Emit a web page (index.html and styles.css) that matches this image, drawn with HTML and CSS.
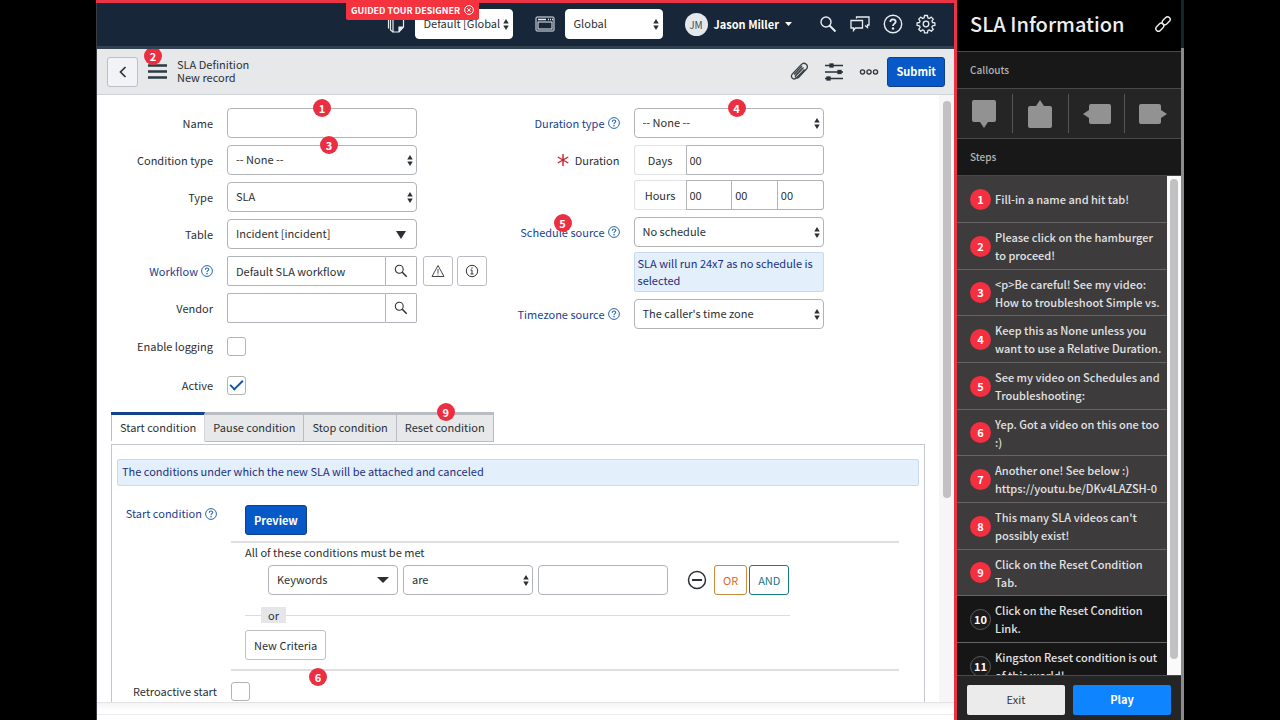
FILE: index.html
```html
<!DOCTYPE html>
<html lang="en">
<head>
<meta charset="utf-8">
<title>SLA Definition</title>
<link rel="stylesheet" href="styles.css">
</head>
<body>
<svg class="defs" aria-hidden="true">
  <symbol id="updown" viewBox="0 0 6 12"><path d="M3 0 6 5H0zM3 12 0 7h6z" fill="#2b3036"/></symbol>
  <symbol id="down" viewBox="0 0 10 8"><path d="M0 0h10L5 8z" fill="#2b3036"/></symbol>
  <symbol id="flat" viewBox="0 0 12 6"><path d="M0 0h12L6 6z" fill="#2b3036"/></symbol>
  <symbol id="search" viewBox="0 0 16 16"><g fill="none" stroke="currentColor"><circle cx="6" cy="6" r="4.5" stroke-width="1.2"/><path d="m9.5 9.500 5 5" stroke-width="1.7"/></g></symbol>
  <symbol id="help" viewBox="0 0 12 12"><circle cx="6" cy="6" r="5.400" fill="none" stroke="currentColor" stroke-width="1"/><path d="M4.300 4.700C4.300 2.500 7.700 2.600 7.700 4.500 7.700 5.700 6 5.700 6 7.200" fill="none" stroke="currentColor" stroke-width="1.100"/><circle cx="6" cy="8.800" r=".8" fill="currentColor"/></symbol>
</svg>
<div class="screen">
  <main class="app">
    <div class="tour-flag">GUIDED TOUR DESIGNER
      <svg width="10" height="10" viewBox="0 0 10 10" fill="none" stroke="#fff"><circle cx="5" cy="5" r="4.400"/><path d="m3.200 3.200 3.600 3.600m0-3.600L3.200 6.800"/></svg>
    </div>
    <header class="topbar">
      <svg class="icon-copy" width="18" height="20" viewBox="0 0 18 20" fill="none" stroke="#e8edf2" stroke-width="1.200"><path d="M1.500 0v14.500M3.500 0v16l2.500 2"/><path d="M6 1h10.500v12l-4.500 5H6z"/><path d="M16.500 13H12v5" fill="#e8edf2"/></svg>
      <span class="select pick-set"><select aria-label="Update set"><option>Default [Global</option></select><svg><use href="#updown"/></svg></span>
      <svg class="icon-window" width="20" height="16" viewBox="0 0 20 16" fill="none" stroke="#e8edf2"><rect x="1" y="1" width="18" height="14" rx="1"/><path d="M3 3.500h8M13 3.500h1m1 0h1m1 0h1" stroke-width="1.400"/><rect x="3" y="6" width="14" height="7"/></svg>
      <span class="select pick-app"><select aria-label="Application"><option>Global</option></select><svg><use href="#updown"/></svg></span>
      <button class="user"><span class="avatar">JM</span><span>Jason Miller</span><svg width="7" height="4" viewBox="0 0 7 4"><path d="M0 0h7L3.500 4z" fill="#fff"/></svg></button>
      <nav class="tools">
        <button aria-label="Search"><svg width="18" height="18" viewBox="0 0 18 18" fill="none" stroke="#e8edf2"><circle cx="7" cy="7" r="5" stroke-width="1.400"/><path d="m10.500 10.500 6 6" stroke-width="1.900"/></svg></button>
        <button aria-label="Chat"><svg width="20" height="18" viewBox="0 0 20 18" fill="none" stroke="#e8edf2" stroke-width="1.300"><path d="M1 5.500h11.500v7.500H5.500L3.500 15.500V13H1z"/><path d="M6.500 3.500V2H19v8h-1.500v2.500L15 10.500"/></svg></button>
        <button aria-label="Help"><svg width="20" height="20" viewBox="0 0 20 20"><circle cx="10" cy="10" r="8.700" fill="none" stroke="#e8edf2" stroke-width="1.400"/><path d="M7.300 8C7.300 4.600 12.700 4.700 12.700 7.800 12.700 9.600 10 9.700 10 12" fill="none" stroke="#e8edf2" stroke-width="1.800"/><circle cx="10" cy="14.500" r="1.200" fill="#e8edf2"/></svg></button>
        <button aria-label="Settings"><svg width="20" height="20" viewBox="0 0 20 20" fill="none" stroke="#e8edf2" stroke-width="1.300" stroke-linejoin="round"><circle cx="10" cy="10" r="2.800"/><path d="M8.500 1.500h3l.4 2.400 1.400.6 2-1.400 2 2-1.400 2 .6 1.400 2.400.4v2.500l-2.400.4-.6 1.500 1.400 2-2 2-2-1.400-1.400.6-.4 2.400h-3l-.4-2.400-1.400-.6-2 1.400-2-2 1.400-2-.6-1.500-2.400-.4V8.900l2.400-.4.600-1.400-1.400-2 2-2 2 1.400 1.400-.6z"/></svg></button>
      </nav>
    </header>
    <div class="record-head">
      <button class="back" aria-label="Back"><svg width="8" height="12" viewBox="0 0 8 12"><path d="M6.500 1 1.500 6l5 5" fill="none" stroke="#2b3340" stroke-width="1.700"/></svg></button>
      <button class="burger" aria-label="Menu"><svg width="19" height="15" viewBox="0 0 19 15"><path d="M0 1.500h19M0 7.500h19M0 13.500h19" stroke="#2b3a44" stroke-width="2.400"/></svg><b class="badge b2">2</b></button>
      <h1>SLA Definition<br>New record</h1>
      <div class="record-tools">
        <button aria-label="Attachments"><svg width="20" height="20" viewBox="0 0 20 20" fill="none" stroke="#3c4248" stroke-width="1.300"><path d="m15.500 7.500-7.800 8.300c-3 3-7-.7-4.300-3.900l8.800-9.300c3.500-3.300 8.200 1 5 4.700l-7.400 7.900c-2 2-4.500-.2-2.700-2.400l6.300-6.600M5 12.500l8-8.500M6 14.500l8.500-9"/></svg></button>
        <button aria-label="Personalize"><svg width="20" height="20" viewBox="0 0 20 20" stroke="#2b3138" stroke-width="1.300" fill="#2b3138"><path d="M1 3.500h18M1 10h18M1 16.500h18"/><rect x="6" y="2" width="3" height="3"/><rect x="14" y="8.500" width="3" height="3"/><rect x="3" y="15" width="3" height="3"/></svg></button>
        <button aria-label="More"><svg width="20" height="8" viewBox="0 0 20 8" fill="none" stroke="#2b3138" stroke-width="1.300"><circle cx="3.500" cy="4" r="2.100"/><circle cx="10" cy="4" r="2.100"/><circle cx="16.500" cy="4" r="2.100"/></svg></button>
        <button class="primary">Submit</button>
      </div>
    </div>
    <div class="viewport">
      <form class="form">
        <div class="columns">
          <div class="col left">
            <div class="row"><label for="name">Name</label><div class="field"><input id="name" type="text"><b class="badge b1">1</b></div></div>
            <div class="row"><label for="ctype">Condition type</label><div class="field select"><select id="ctype"><option>-- None --</option></select><svg><use href="#updown"/></svg><b class="badge b3">3</b></div></div>
            <div class="row"><label for="type">Type</label><div class="field select"><select id="type"><option>SLA</option></select><svg><use href="#updown"/></svg></div></div>
            <div class="row"><label for="table">Table</label><div class="field select wide"><select id="table"><option>Incident [incident]</option></select><svg><use href="#down"/></svg></div></div>
            <div class="row"><label class="link" for="wf">Workflow <svg><use href="#help"/></svg></label><div class="field ref"><input id="wf" type="text" value="Default SLA workflow"><button type="button" aria-label="Look up workflow"><svg width="14" height="14"><use href="#search"/></svg></button></div>
              <button type="button" class="square" aria-label="Warning"><svg width="14" height="14" viewBox="0 0 14 14" fill="none" stroke="#444"><path d="M7 1.500 13 12.500H1z"/><path d="M7 5v4.500m0 1v1"/></svg></button>
              <button type="button" class="square" aria-label="Preview record"><svg width="14" height="14" viewBox="0 0 14 14" fill="none" stroke="#333"><circle cx="7" cy="7" r="5.700"/><path d="M7 3.200v1.500M5.500 6H7v4M5.500 10h3"/></svg></button></div>
            <div class="row"><label for="vendor">Vendor</label><div class="field ref"><input id="vendor" type="text"><button type="button" aria-label="Look up vendor"><svg width="14" height="14"><use href="#search"/></svg></button></div></div>
            <div class="row check"><label for="log">Enable logging</label><input id="log" type="checkbox"></div>
            <div class="row check"><label for="active">Active</label><input id="active" type="checkbox" checked></div>
          </div>
          <div class="col right">
            <div class="row"><label class="link" for="dtype">Duration type <svg><use href="#help"/></svg></label><div class="field select"><select id="dtype"><option>-- None --</option></select><svg><use href="#updown"/></svg><b class="badge b4">4</b></div></div>
            <div class="row"><label for="days"><svg class="req" viewBox="0 0 12 12"><path d="M6 0v12M.8 3l10.400 6M.8 9l10.400-6" stroke="#c4262e" stroke-width="1.400"/></svg> Duration</label>
              <div class="field stack">
                <div class="units"><span>Days</span><input id="days" type="text" value="00"></div>
                <div class="units"><span>Hours</span><input aria-label="Hours" type="text" value="00"><input aria-label="Minutes" type="text" value="00"><input aria-label="Seconds" type="text" value="00"></div>
              </div></div>
            <div class="row"><label class="link" for="sched">Schedule source <svg><use href="#help"/></svg><b class="badge b5">5</b></label><div class="field stack"><div class="select"><select id="sched"><option>No schedule</option></select><svg><use href="#updown"/></svg></div><p class="note">SLA will run 24x7 as no schedule is selected</p></div></div>
            <div class="row"><label class="link" for="tz">Timezone source <svg><use href="#help"/></svg></label><div class="field select"><select id="tz"><option>The caller's time zone</option></select><svg><use href="#updown"/></svg></div></div>
          </div>
        </div>
        <div class="tabs" role="tablist">
          <button type="button" role="tab" aria-selected="true">Start condition</button><button type="button" role="tab">Pause condition</button><button type="button" role="tab">Stop condition</button><button type="button" role="tab">Reset condition<b class="badge b9">9</b></button>
        </div>
        <section class="panel">
          <p class="note">The conditions under which the new SLA will be attached and canceled</p>
          <div class="cond-row">
            <span class="cond-label link">Start condition <svg><use href="#help"/></svg></span>
            <div class="cond">
              <button type="button" class="primary preview">Preview</button>
              <div class="builder">
                <p>All of these conditions must be met</p>
                <div class="terms">
                  <span class="select wide kw"><select aria-label="Field"><option>Keywords</option></select><svg><use href="#flat"/></svg></span>
                  <span class="select"><select aria-label="Operator"><option>are</option></select><svg><use href="#updown"/></svg></span>
                  <input type="text" aria-label="Value">
                  <button type="button" class="minus" aria-label="Remove"><svg width="20" height="20" viewBox="0 0 20 20" fill="none" stroke="#2b3036" stroke-width="1.500"><circle cx="10" cy="10" r="8.500"/><path d="M5 10h10" stroke-width="2"/></svg></button>
                  <button type="button" class="or">OR</button>
                  <button type="button" class="and">AND</button>
                </div>
                <div class="divider"><span>or</span></div>
                <button type="button" class="criteria">New Criteria</button>
              </div>
              <b class="badge b6">6</b>
            </div>
          </div>
          <div class="retro"><label for="retro">Retroactive start</label><input id="retro" type="checkbox"></div>
        </section>
      </form>
      <div class="scroll"><i></i></div>
    </div>
    <div class="under"></div>
  </main>
  <aside class="side">
    <header><h2>SLA Information</h2><button aria-label="Copy link"><svg width="18" height="18" viewBox="0 0 18 18" fill="none" stroke="#eee" stroke-width="1.400"><rect x="-4.500" y="-2.600" width="9" height="5.200" rx="2.600" transform="translate(12.200 5.800) rotate(-45)"/><rect x="-4.500" y="-2.600" width="9" height="5.200" rx="2.600" transform="translate(5.800 12.200) rotate(-45)"/></svg></button></header>
    <h3>Callouts</h3>
    <div class="callouts">
      <button aria-label="Callout pointing down"><svg viewBox="0 0 28 28"><path d="M3 0h20q2 0 2 2v18q0 2-2 2h-6l-4 6-4-6H3q-2 0-2-2V2q0-2 2-2z"/></svg></button>
      <button aria-label="Callout pointing up"><svg viewBox="0 0 28 28"><path d="M3 6h6l4-6 4 6h6q2 0 2 2v18q0 2-2 2H3q-2 0-2-2V8q0-2 2-2z"/></svg></button>
      <button aria-label="Callout pointing left"><svg viewBox="0 0 28 28"><path d="M8 4h18q2 0 2 2v16q0 2-2 2H8q-2 0-2-2v-4l-6-4 6-4V6q0-2 2-2z"/></svg></button>
      <button aria-label="Callout pointing right"><svg viewBox="0 0 28 28"><path d="M2 4h18q2 0 2 2v4l6 4-6 4v4q0 2-2 2H2q-2 0-2-2V6q0-2 2-2z"/></svg></button>
    </div>
    <h3>Steps</h3>
    <div class="steps">
      <ol>
        <li><b>1</b><span>Fill-in a name and hit tab!</span></li>
        <li><b>2</b><span>Please click on the hamburger<br>to proceed!</span></li>
        <li><b>3</b><span>&lt;p&gt;Be careful! See my video:<br>How to troubleshoot Simple vs.</span></li>
        <li><b>4</b><span>Keep this as None unless you<br>want to use a Relative Duration.</span></li>
        <li><b>5</b><span>See my video on Schedules and<br>Troubleshooting:</span></li>
        <li><b>6</b><span>Yep. Got a video on this one too<br>:)</span></li>
        <li><b>7</b><span>Another one! See below :)<br>https://youtu.be/DKv4LAZSH-0</span></li>
        <li><b>8</b><span>This many SLA videos can't<br>possibly exist!</span></li>
        <li><b>9</b><span>Click on the Reset Condition<br>Tab.</span></li>
        <li class="later"><b>10</b><span>Click on the Reset Condition<br>Link.</span></li>
        <li class="later"><b>11</b><span>Kingston Reset condition is out<br>of this world!</span></li>
      </ol>
      <div class="scroll"><i></i></div>
    </div>
    <footer><button class="exit">Exit</button><button class="play">Play</button></footer>
  </aside>
  <div class="edge"></div>
</div>
</body>
</html>
```

FILE: styles.css
```css
* { box-sizing: border-box; }
body, h1, h2, h3, p, ol { margin: 0; padding: 0; }
body { background: #000; color: #2b2f33; font: 11px/17px "Noto Sans CJK SC", "Open Sans", sans-serif; }
button, input, select { font: inherit; color: inherit; margin: 0; }
button { border: 0; background: none; padding: 0; cursor: pointer; display: inline-flex; align-items: center; justify-content: center; white-space: nowrap; }
svg { flex: none; }
.defs { display: none; }
.screen { display: flex; height: 100vh; overflow: hidden; padding: 0 96px; }

.app { position: relative; flex: 1; min-width: 0; display: flex; flex-direction: column; background: #fff; border: solid #ea3445; border-width: 3px 3px 0 0; box-shadow: inset 1px 0 #3a3a40; padding-left: 1px; }
.tour-flag { position: absolute; z-index: 3; top: -3px; left: 250px; height: 20px; padding: 0 5px; display: flex; align-items: center; gap: 4px; background: #f4333f; color: #fff; font-size: 9px; font-weight: 700; border-radius: 0 0 2px 2px; white-space: nowrap; }
.topbar { display: flex; align-items: center; justify-content: flex-end; flex: none; height: 46px; padding: 0 18px 1px 0; background: #172638; border-bottom: 3px solid #314150; }
.select { position: relative; display: block; }
.select > svg { position: absolute; right: 4px; top: 50%; width: 6px; height: 11px; margin-top: -5px; pointer-events: none; }
.select.wide > svg { right: 11px; width: 10px; height: 8px; margin-top: -3px; }
.select.kw > svg { right: 9px; width: 12px; height: 6px; }
select, input[type="text"] { appearance: none; display: block; width: 100%; height: 30px; border: 1px solid #b0b3b8; border-radius: 4px; background: #fff; padding: 0 8px 1px; outline: 0; min-width: 0; }
.topbar select { border-color: #fff; }
.pick-set { width: 98px; margin: 0 22px 0 10px; }
.pick-set select { padding-right: 0; }
.pick-app { width: 98px; margin: 0 22px 0 10px; }
.user { color: #fff; font-weight: 700; gap: 6px; }
.avatar { width: 23px; height: 23px; border-radius: 50%; background: #e4e7eb; color: #444b55; font-weight: 400; font-size: 10px; line-height: 23px; }
.tools { display: flex; gap: 13px; margin-left: 27px; }

.record-head { display: flex; align-items: center; flex: none; height: 46px; padding: 0 9px 0 10px; background: #e6e8ea; border-bottom: 1px solid #cfd3da; }
.back { width: 31px; height: 30px; border: 1px solid #b9bfcb; border-radius: 3px; background: #f2f3f6; }
.burger { position: relative; margin: 0 10px; }
h1 { font-size: 11px; line-height: 13px; font-weight: 400; padding-bottom: 2px; }
.record-tools { margin-left: auto; display: flex; align-items: center; gap: 15px; }
.primary { height: 30px; padding: 0 8px; background: #0659c7; border: 1px solid #124087; border-radius: 3px; color: #fff; font-weight: 700; }
.record-tools .primary { margin-left: -7px; }

.viewport { flex: 1; min-height: 0; display: flex; overflow: hidden; }
.form { flex: 1; min-width: 0; padding: 13px 14px 0; }
.scroll { flex: none; width: 15px; background: #f6f6f8; padding: 6px 4px; }
.scroll i { display: block; width: 8px; height: 397px; border-radius: 4px; background: #c1c1c4; }
.columns { display: grid; grid-template-columns: 400fr 415fr; }
.col { display: flex; flex-direction: column; gap: 7px; min-width: 0; }
.row { display: flex; align-items: flex-start; }
.row > label { position: relative; flex: none; width: 102px; margin-right: 14px; line-height: 30px; display: flex; justify-content: flex-end; align-items: center; gap: 3px; white-space: nowrap; }
.right .row > label { width: 109px; }
.link { color: #22408f; }
.link svg { width: 12px; height: 12px; color: #2468a8; }
.row > label .req { width: 12px; height: 12px; margin-right: 3px; }
.field { position: relative; flex: 0 1 190px; min-width: 0; }
.check { height: 32px; align-items: center; }
input[type="checkbox"] { appearance: none; flex: none; width: 19px; height: 19px; border: 1px solid #b0b3b8; border-radius: 3px; background: #fff; display: grid; place-items: center; }
input[type="checkbox"]:checked::before { content: ""; width: 11px; height: 5px; border: solid #1158a5; border-width: 0 0 2px 2px; transform: rotate(-45deg); margin-bottom: 4px; }
.ref { display: flex; margin-right: 6px; }
.ref input[type="text"] { border-radius: 2px 0 0 2px; }
.ref button { flex: none; width: 31px; border: 1px solid #b0b3b8; border-left: 0; border-radius: 0 2px 2px 0; }
.square { width: 30px; height: 30px; margin-right: 4px; border: 1px solid #b9bcc2; border-radius: 3px; }
.stack { display: grid; gap: 5px; }
.units { display: flex; }
.units span { flex: 0 0 52px; border: 1px solid #e2e2e6; border-right: 0; border-radius: 3px 0 0 3px; text-align: center; line-height: 28px; }
.units input[type="text"] { flex: 1; border-radius: 0; padding: 0 3px; }
.units input + input { border-left: 0; }
.units input[type="text"]:last-child { border-radius: 0 3px 3px 0; }
.note { background: #e3effb; border: 1px solid #c9daee; border-radius: 2px; color: #1d2f80; padding: 2px 3px; }
.badge { position: absolute; z-index: 2; width: 18px; height: 18px; border-radius: 50%; background: #ea2f42; color: #fff; font-weight: 700; font-size: 11px; line-height: 18px; text-align: center; }
.b1 { left: 86px; top: -9px; }
.b2 { left: -4px; top: -17px; clip-path: inset(2px 0 0); }
.b3 { left: 93px; top: -9px; }
.b4 { left: 94px; top: -9px; }
.b5 { right: 48px; top: -3px; }
.b6 { left: 78px; bottom: -15px; }
.b9 { left: 40px; top: -12px; }

.tabs { display: flex; margin-top: 11px; }
.tabs button { position: relative; height: 30px; padding: 0 8px 2px; background: #e6e8ea; border: 1px solid #b9bcc2; border-left: 0; border-top-width: 3px; }
.tabs button[aria-selected] { background: #fff; border-color: #11448c #d5d7db #fff; box-shadow: inset 1px 0 #b9bcc2; padding-left: 9px; }
.panel { margin-top: 2px; border: 1px solid #c3c6cb; height: 400px; padding: 14px 5px; }
.panel > .note { padding: 3px 4px 5px; }
.cond-row { display: flex; align-items: flex-start; margin-top: 19px; }
.cond-label { flex: none; width: 100px; margin-right: 14px; display: flex; align-items: center; justify-content: flex-end; gap: 3px; white-space: nowrap; }
.cond { position: relative; flex: 1; margin-right: 20px; min-width: 0; }
.preview { margin: 0 0 6px 14px; padding: 0 8px; }
.builder { border: solid #dfdfe2; border-width: 2px 0; padding: 1px 0 9px 14px; }
.terms { display: flex; align-items: center; margin-top: 4px; padding-left: 23px; }
.terms .select, .terms input[type="text"] { flex: 0 1 130px; margin-right: 5px; }
.minus { margin: 0 7px 0 14px; }
.or, .and, .criteria { height: 30px; border: 1px solid; border-radius: 3px; padding: 0 8px; }
.or { color: #e0632a; border-color: #c98a3c; margin-right: 2px; }
.and { color: #17798c; }
.criteria { border-color: #bfc1c5; }
.divider { display: flex; width: 545px; max-width: 100%; align-items: center; margin: 12px 0 7px; }
.divider::before, .divider::after { content: ""; height: 1px; background: #dcdce0; flex: 0 0 16px; }
.divider::after { flex: 1; }
.divider span { background: #e5e6ea; padding: 0 7px; line-height: 16px; }
.retro { display: flex; align-items: center; margin-top: 11px; }
.retro label { width: 100px; margin-right: 14px; text-align: right; white-space: nowrap; }
.under { flex: none; height: 18px; border-top: 1px solid #e4e4e6; background: linear-gradient(#f3f3f4, #fff 8px); }
.under::after { content: ""; display: block; margin-top: 11px; border-top: 1px solid #ececee; }

.side { flex: none; width: 224px; display: flex; flex-direction: column; background: #252525; color: #e2e2e2; }
.side header { flex: none; display: flex; align-items: center; justify-content: space-between; height: 51px; padding: 0 9px 3px 13px; background: #000; }
h2 { font-size: 20px; line-height: 30px; font-weight: 500; white-space: nowrap; color: #eee; }
h3 { flex: none; height: 38px; padding-left: 13px; background: #181818; border: solid #484848; border-width: 1px 0; font-size: 10px; line-height: 36px; font-weight: 500; color: #b2b2b2; }
.callouts { flex: none; height: 49px; display: grid; grid-template-columns: repeat(4, 1fr); align-items: center; }
.callouts button { height: 39px; border-right: 1px solid #555; }
.callouts button:last-child { border: 0; }
.callouts svg { width: 28px; height: 28px; fill: #929292; }
.steps { flex: 1; min-height: 0; display: flex; overflow: hidden; }
ol { flex: 1; min-width: 0; list-style: none; }
li { display: flex; align-items: center; height: 47px; padding-left: 13px; gap: 4px; background: #3d3b3c; border-bottom: 1px solid #656565; font-weight: 500; white-space: nowrap; line-height: 18px; }
li:nth-child(3n) { height: 46px; }
li b { flex: none; width: 21px; height: 21px; border-radius: 50%; background: #f42f40; color: #fff; line-height: 21px; text-align: center; font-weight: 700; }
li.later { background: #161616; }
.later b { background: #1c1c1c; border: 1px solid #5b5b5b; line-height: 19px; }
.steps .scroll { width: 14px; background: #fafafa; padding: 3px 3px; }
.steps .scroll i { height: 480px; }
.side footer { flex: none; height: 45px; display: flex; gap: 8px; padding: 9px 10px 5px; border-top: 1px solid #4a4a4a; }
.side footer button { flex: 1; height: 30px; border-radius: 2px; padding-bottom: 1px; }
.exit { background: #ebebeb; color: #333; }
.play { background: #0f84ff; color: #fff; font-weight: 700; }
.edge { flex: none; width: 3px; background: linear-gradient(#14262b 48px, #8b8b8b 48px); }
```
